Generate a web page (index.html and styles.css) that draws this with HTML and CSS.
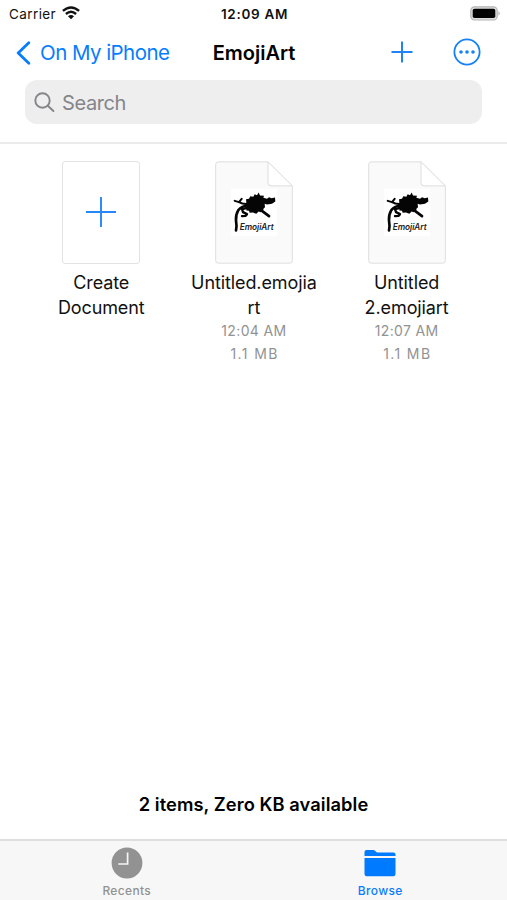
FILE: index.html
```html
<!DOCTYPE html>
<html lang="en">
<head>
<meta charset="utf-8">
<title>EmojiArt</title>
<link rel="stylesheet" href="styles.css">
</head>
<body>
<svg class="defs" width="0" height="0" aria-hidden="true">
  <defs><g id="document">
    <path d="M115 35H264L337 108V331Q337 339 329 339H115Q107 339 107 331V43Q107 35 115 35Z" fill="#fafafa" stroke="#dedede" stroke-width="3"/>
    <path d="M264 35V98Q264 107 273 107H337Z" fill="#fff" stroke="#dedede" stroke-width="3" stroke-linejoin="round"/>
    <rect x="154" y="116" width="138" height="142" fill="#fff"/>
    <g fill="none" stroke="#050505" stroke-linecap="round" stroke-linejoin="round">
      <path d="M208 167Q187 165 175 180Q167 193 168 211Q171 227 168 241" stroke-width="8"/>
      <path d="M203 162L187 160L177 156L164 152M177 156L185 146" stroke-width="6"/>
      <path d="M206 172L186 177L189 186L201 192L197 197L186 198" stroke-width="7"/>
      <path d="M244 168L247 183L267 198" stroke-width="8"/>
    </g>
    <path d="M195 165L199 157L198 147L207 146L211 138L220 140L224 132L231 135L236 127L240 136L252 137L250 143L261 146L267 141L275 144L285 142L286 154L276 161L261 163L254 161L255 171L248 178L242 186L236 184L229 191L219 187L209 188L207 182L199 181L200 171Z" fill="#050505"/>
  </g></defs>
</svg>
<div class="screen">
  <header>
    <div class="status">
      <div class="carrier"><span>Carrier</span>
        <svg width="18" height="14" viewBox="0 0 18 14" fill="none" stroke="#111" stroke-width="2.4"><path d="M.9 4.9Q9-2 17.1 4.9M3.9 8Q9 3.6 14.1 8"/><path d="M6 10.3Q9 7.9 12 10.3L9 13.3Z" fill="#111" stroke="none"/></svg>
      </div>
      <div class="time">12:09 AM</div>
      <svg class="battery" width="31" height="15" viewBox="0 0 31 15"><rect x=".8" y=".8" width="26.4" height="13.2" rx="3.8" fill="#ddd" stroke="#b5b5b5" stroke-width="1.2"/><rect x="2.7" y="2.7" width="22.6" height="9.4" rx="1.8" fill="#000"/><path d="M28.5 5Q31 7.4 28.5 9.8Z" fill="#aaa"/></svg>
    </div>
    <nav>
      <div class="back"><svg width="15" height="24" viewBox="0 0 15 24"><path d="M12.8 1.7L2.2 12L12.8 22.3" fill="none" stroke="#087cff" stroke-width="2.8" stroke-linecap="round" stroke-linejoin="round"/></svg><span>On My iPhone</span></div>
      <h1>EmojiArt</h1>
      <div class="actions">
        <svg width="22" height="22" viewBox="0 0 22 22"><path d="M11 .5V21.5M.5 11H21.5" stroke="#2083f5" stroke-width="2"/></svg>
        <svg width="28" height="28" viewBox="0 0 28 28"><circle cx="14" cy="14" r="12.6" fill="none" stroke="#1680f5" stroke-width="1.8"/><g fill="#1680f5"><circle cx="8" cy="14" r="1.8"/><circle cx="14" cy="14" r="1.8"/><circle cx="20" cy="14" r="1.8"/></g></svg>
      </div>
    </nav>
    <div class="search"><svg width="21" height="21" viewBox="0 0 21 21" fill="none" stroke="#858589" stroke-width="1.9" stroke-linecap="round"><circle cx="8.5" cy="8.5" r="7.2"/><path d="M13.8 13.8L19.4 19"/></svg><span>Search</span></div>
  </header>
  <main>
    <section class="files">
      <article><div class="create"><svg width="30" height="30" viewBox="0 0 30 30"><path d="M15 0V30M0 15H30" stroke="#2687f7" stroke-width="1.9"/></svg></div>
        <h2>Create<br>Document</h2></article>
      <article><svg class="doc" viewBox="105 33 234 308"><use href="#document"/><text x="179" y="240" class="logo-text" textLength="102" lengthAdjust="spacingAndGlyphs">EmojiArt</text></svg>
        <h2>Untitled.emojia<br>rt</h2><p>12:04 AM</p><p class="size">1.1 MB</p></article>
      <article><svg class="doc" viewBox="105 33 234 308"><use href="#document"/><text x="179" y="240" class="logo-text" textLength="102" lengthAdjust="spacingAndGlyphs">EmojiArt</text></svg>
        <h2>Untitled<br>2.emojiart</h2><p>12:07 AM</p><p class="size">1.1 MB</p></article>
    </section>
    <div class="summary">2 items, Zero KB available</div>
  </main>
  <footer>
    <div class="tab"><svg width="32" height="32" viewBox="0 0 32 32"><circle cx="16" cy="16" r="15.4" fill="#929292"/><path d="M16.6 5.5V17H7.3" fill="none" stroke="#f5f5f5" stroke-width="1.7"/></svg><span>Recents</span></div>
    <div class="tab active"><svg width="32" height="32" viewBox="0 0 32 32"><path d="M.5 9V5Q.5 3 2.5 3H9Q10.5 3 11.3 4L13 5.5H29.5Q31.5 5.5 31.5 7.5V9ZM.5 11H31.5V27Q31.5 29.3 29.3 29.3H2.7Q.5 29.3 .5 27Z" fill="#007aff"/></svg><span>Browse</span></div>
  </footer>
</div>
</body>
</html>
```
FILE: styles.css
```css
* { box-sizing: border-box; }
body { margin: 0; background: #fff; color: #111; font-family: Inter, "Liberation Sans", sans-serif; }
.defs { position: absolute; }
.screen { width: 507px; height: 900px; display: flex; flex-direction: column; overflow: hidden; }
header { height: 144px; border-bottom: 2px solid #ebebeb; }
.status { height: 28px; display: grid; grid-template-columns: 1fr auto 1fr; padding: 0 6px 0 9px; align-items: center; font-size: 13.5px; }
.carrier { display: flex; align-items: center; gap: 6px; letter-spacing: .4px; }
.carrier svg { margin-top: -3px; }
.time { font-weight: 600; letter-spacing: .7px; margin-left: -1px; }
.battery { justify-self: end; margin-top: -2px; }
nav { height: 49px; display: grid; grid-template-columns: minmax(0, 1fr) auto minmax(0, 1fr); align-items: center; padding: 0 16px; color: #087cff; }
.back { display: flex; align-items: center; gap: 9px; font-size: 20.5px; white-space: nowrap; letter-spacing: -.55px; }
h1 { margin: 0; color: #000; font-size: 20px; font-weight: 600; letter-spacing: 0; padding-left: 1px; }
.actions { justify-self: end; display: flex; align-items: center; gap: 40px; margin: -1px 10px 0 0; }
.search { height: 44px; margin: 3px 25px 0; padding-left: 9px; border-radius: 12px; background: #eee; display: flex; align-items: center; gap: 7px; color: #858589; font-size: 20px; letter-spacing: -.4px; }
.search span { padding-top: 1px; }
main { flex: 1; display: flex; flex-direction: column; justify-content: space-between; }
.files { display: grid; grid-template-columns: repeat(3, 152.7px); padding: 16px 0 0 24.9px; text-align: center; }
article { display: flex; flex-direction: column; align-items: center; }
.doc { display: block; width: 78px; height: 103px; margin-top: 1px; overflow: visible; }
.create { width: 78px; height: 103px; margin-top: 1px; padding-bottom: 2px; display: grid; place-items: center; border: 1px solid #e3e3e3; border-radius: 3px; }
.logo-text { font: italic 600 25px Inter, sans-serif; fill: #222; }
h2 { margin: 7px 0 0; font-size: 18px; line-height: 24.5px; font-weight: 400; letter-spacing: -.1px; }
p { margin: 0; color: #929292; font-size: 14px; line-height: 22.5px; letter-spacing: .35px; }
.size { letter-spacing: 1.4px; padding-left: 1.4px; }
.summary { height: 69px; text-align: center; font-size: 18.3px; line-height: 69px; font-weight: 600; color: #000; letter-spacing: .08px; }
footer { height: 61px; display: grid; grid-template-columns: 1fr 1fr; background: #f7f7f7; border-top: 2px solid #dedede; }
.tab { display: flex; flex-direction: column; align-items: center; padding-top: 6px; color: #929292; font-size: 12px; font-weight: 500; letter-spacing: .35px; gap: 4px; }
.active { color: #087cff; }
```
